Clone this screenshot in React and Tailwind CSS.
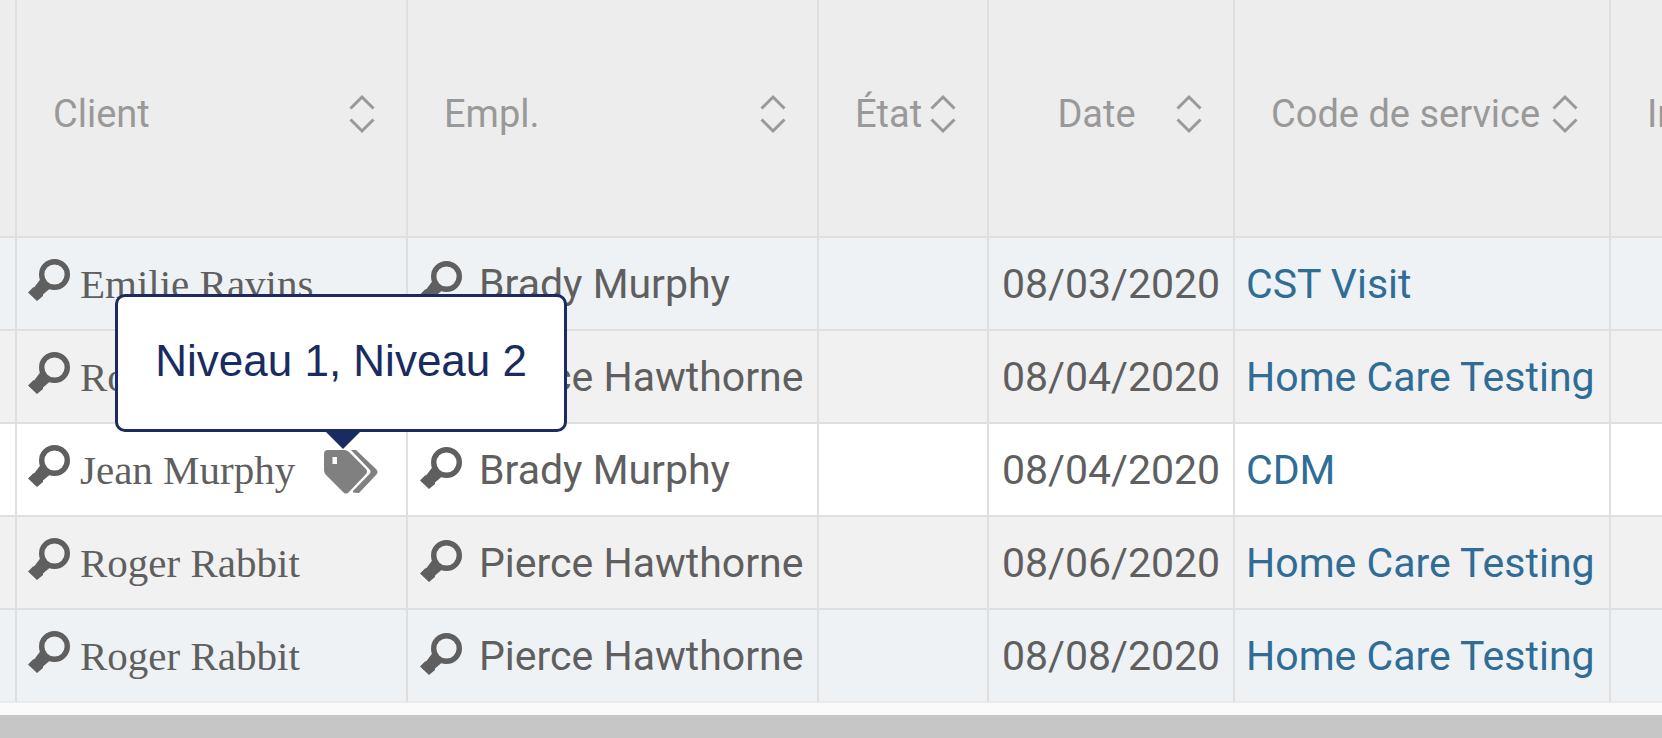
import clsx from 'clsx';

const columns = [
  { key: 'client', label: 'Client' },
  { key: 'employee', label: 'Empl.' },
  { key: 'state', label: 'État' },
  { key: 'date', label: 'Date', centered: true },
  { key: 'service', label: 'Code de service' },
];

const visits = [
  { id: 1, client: 'Emilie Ravins', employee: 'Brady Murphy', date: '08/03/2020', service: 'CST Visit', tone: 'blue' },
  { id: 2, client: 'Roger Rabbit', employee: 'Pierce Hawthorne', date: '08/04/2020', service: 'Home Care Testing', tone: 'gray' },
  { id: 3, client: 'Jean Murphy', employee: 'Brady Murphy', date: '08/04/2020', service: 'CDM', tone: 'white', tags: 'Niveau 1, Niveau 2' },
  { id: 4, client: 'Roger Rabbit', employee: 'Pierce Hawthorne', date: '08/06/2020', service: 'Home Care Testing', tone: 'gray' },
  { id: 5, client: 'Roger Rabbit', employee: 'Pierce Hawthorne', date: '08/08/2020', service: 'Home Care Testing', tone: 'blue' },
];

const tones = {
  blue: 'bg-[#eef2f5]',
  gray: 'bg-[#f1f1f1]',
  white: 'bg-white',
};

function SearchIcon() {
  return (
    <svg viewBox="0 0 42 42" className="size-[42px]" aria-hidden="true">
      <circle cx="26.5" cy="15.5" r="12.8" fill="none" stroke="#5f5f5f" strokeWidth="5.4" />
      <path d="M12.5 20 L22 29.5 L15 35.5 L15 37 L9 42 L0 33.5 L5 28.5 L6.5 28 Z" fill="#5f5f5f" />
    </svg>
  );
}

function SortIcon() {
  return (
    <svg viewBox="0 0 26 40" className="h-10 w-[26px] shrink-0" fill="none" stroke="#999" strokeWidth="3" aria-hidden="true">
      <path d="M1.5 14.5 L13 3 L24.5 14.5" />
      <path d="M1.5 25.5 L13 37 L24.5 25.5" />
    </svg>
  );
}

function TagsIcon() {
  return (
    <svg viewBox="0 0 54 44" className="h-11 w-[54px]" fill="#808080" aria-hidden="true">
      <path
        fillRule="evenodd"
        d="M4 0 H20 Q23 0 25 2 L42 19 Q44 21.500 42 24 L25 42 Q22 45 19 42 L2 25 Q0 23 0 20 V4 Q0 0 4 0 Z M8.500 7 V14 H13 V7 Z"
      />
      <path d="M27 0 H32 L52 19 Q55 22 52 25 L35 43 L29 42.500 L29 41 L45.500 24 Q47.500 21.500 45.500 19.500 Z" />
    </svg>
  );
}

function Tooltip({ text }) {
  return (
    <div
      role="tooltip"
      className="absolute right-[-189px] bottom-[62px] z-10 flex h-[138px] items-center rounded-[10px] border-[3px] border-[#1a2b62] bg-white px-[37px] pb-1 font-['Liberation_Sans',sans-serif] text-[44px] leading-none whitespace-nowrap text-[#1a2b62]"
    >
      {text}
      <svg viewBox="0 0 40 20" className="absolute top-full right-[201px] h-5 w-10" aria-hidden="true">
        <path d="M0 0 H40 L20 20 Z" fill="#1a2b62" />
      </svg>
    </div>
  );
}

function VisitRow({ visit, last }) {
  const cell = clsx(
    'h-[93px] border-r-2 border-b-2 border-r-[#dfdfdf] p-0 last:border-r-0',
    last ? 'border-b-[#ebebeb]' : 'border-b-[#dfdfdf]',
    tones[visit.tone]
  );

  return (
    <tr>
      <td className={cell} />
      <td className={cell}>
        <div className="flex items-center pl-[11px] font-['Liberation_Serif',serif]">
          <button type="button" aria-label={`Voir ${visit.client}`} className="mb-2">
            <SearchIcon />
          </button>
          <span className="pl-[10px]">{visit.client}</span>
          {visit.tags && (
            <div className="relative mr-7 ml-auto">
              <button type="button" aria-label="Niveaux" className="block pt-1">
                <TagsIcon />
              </button>
              <Tooltip text={visit.tags} />
            </div>
          )}
        </div>
      </td>
      <td className={cell}>
        <div className="flex items-center pl-3">
          <button type="button" aria-label={`Voir ${visit.employee}`} className="mb-1">
            <SearchIcon />
          </button>
          <span className="pl-[17px]">{visit.employee}</span>
        </div>
      </td>
      <td className={cell} />
      <td className={clsx(cell, 'text-center')}>{visit.date}</td>
      <td className={cell}>
        <a href="#service" className="pl-[11px] text-[#2f6d96]">
          {visit.service}
        </a>
      </td>
      <td className={cell} />
    </tr>
  );
}

function App() {
  const head = 'h-[238px] border-r-2 border-b-2 border-[#dfdfdf] bg-[#ededed] p-0 font-normal last:border-r-0';

  return (
    <div className="overflow-hidden bg-[#fafafa] font-[Roboto,sans-serif]">
      <table className="w-full min-w-[1640px] table-fixed border-separate border-spacing-0 text-[41px] leading-[48px] whitespace-nowrap text-[#5f5f5f]">
        <colgroup>
          <col className="w-[17px]" />
          <col className="w-[391px]" />
          <col className="w-[411px]" />
          <col className="w-[170px]" />
          <col className="w-[246px]" />
          <col className="w-[376px]" />
          <col />
        </colgroup>
        <thead className="text-[38px] text-[#999]">
          <tr>
            <th className={head} />
            {columns.map((column) => (
              <th key={column.key} scope="col" className={head}>
                <button type="button" className="flex w-full items-center justify-between pr-[31px] pb-2 pl-9">
                  <span className={clsx(column.centered && 'grow pr-2 text-center')}>{column.label}</span>
                  <SortIcon />
                </button>
              </th>
            ))}
            <th scope="col" className={clsx(head, 'overflow-hidden text-left')}>
              <div className="pb-2 pl-9">Int.</div>
            </th>
          </tr>
        </thead>
        <tbody>
          {visits.map((visit, index) => (
            <VisitRow key={visit.id} visit={visit} last={index === visits.length - 1} />
          ))}
        </tbody>
      </table>
      <div className="mt-3 h-[23px] bg-[#c6c6c6]" />
    </div>
  );
}

export default App;
